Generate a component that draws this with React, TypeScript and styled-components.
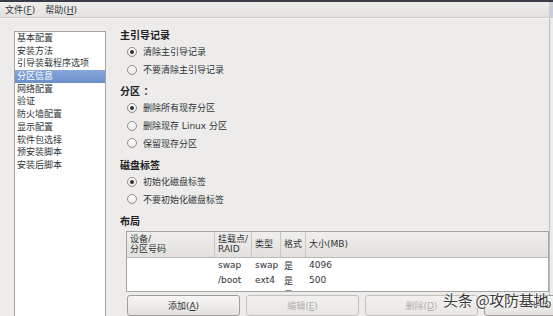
import styled, { createGlobalStyle } from "styled-components"

const GlobalStyle = createGlobalStyle`
  html, body {
    margin: 0;
    padding: 0;
    background: #edeceb;
  }
  body {
    font-family: "DejaVu Sans", "Noto Sans CJK SC", sans-serif;
    font-size: 9px;
    color: #2e3436;
  }
`

const NavItems: string[] = [
  "基本配置",
  "安装方法",
  "引导装载程序选项",
  "分区信息",
  "网络配置",
  "验证",
  "防火墙配置",
  "显示配置",
  "软件包选择",
  "预安装脚本",
  "安装后脚本",
]

type Option = { label: string; checked: boolean }
type Group = { title: string; options: Option[] }

const Groups: Group[] = [
  {
    title: "主引导记录",
    options: [
      { label: "清除主引导记录", checked: true },
      { label: "不要清除主引导记录", checked: false },
    ],
  },
  {
    title: "分区 ：",
    options: [
      { label: "删除所有现存分区", checked: true },
      { label: "删除现存 Linux 分区", checked: false },
      { label: "保留现存分区", checked: false },
    ],
  },
  {
    title: "磁盘标签",
    options: [
      { label: "初始化磁盘标签", checked: true },
      { label: "不要初始化磁盘标签", checked: false },
    ],
  },
]

const Rows: string[][] = [
  ["", "swap", "swap", "是", "4096"],
  ["", "/boot", "ext4", "是", "500"],
  ["", "/", "ext4", "是", "1"],
]

const ColWidths = [88, 37, 29, 25]

const Buttons: { label: string; key: string; disabled: boolean }[] = [
  { label: "添加(", key: "A", disabled: false },
  { label: "编辑(", key: "E", disabled: true },
  { label: "删除(", key: "D", disabled: true },
  { label: "RAID", key: "", disabled: false },
]

export default function App() {
  return (
    <Window>
      <GlobalStyle />
      <TopStrip />
      <MenuBar>
        <MenuEntry>
          文件(<u>F</u>)
        </MenuEntry>
        <MenuEntry>
          帮助(<u>H</u>)
        </MenuEntry>
      </MenuBar>

      <Body>
        <Sidebar>
          {NavItems.map((item) => (
            <NavItem key={item} $active={item === "分区信息"}>
              {item}
            </NavItem>
          ))}
        </Sidebar>

        <Content>
          {Groups.map((group) => (
            <Section key={group.title}>
              <SectionTitle>{group.title}</SectionTitle>
              {group.options.map((opt) => (
                <RadioRow key={opt.label}>
                  <Radio $checked={opt.checked} />
                  {opt.label}
                </RadioRow>
              ))}
            </Section>
          ))}

          <Section>
            <SectionTitle>布局</SectionTitle>
            <Table>
              <HeaderRow>
                <HeadCell $w={ColWidths[0]}>
                  设备/
                  <br />
                  分区号码
                </HeadCell>
                <HeadCell $w={ColWidths[1]}>
                  挂载点/
                  <br />
                  RAID
                </HeadCell>
                <HeadCell $w={ColWidths[2]}>类型</HeadCell>
                <HeadCell $w={ColWidths[3]}>格式</HeadCell>
                <HeadCell $last>大小(MB)</HeadCell>
              </HeaderRow>
              <TableBody>
                {Rows.map((row, i) => (
                  <BodyRow key={i}>
                    {row.map((cell, j) => (
                      <Cell key={j} $w={ColWidths[j]}>
                        {cell}
                      </Cell>
                    ))}
                  </BodyRow>
                ))}
              </TableBody>
            </Table>
          </Section>

          <ButtonRow>
            {Buttons.map((b) => (
              <Button key={b.label} disabled={b.disabled}>
                {b.key ? (
                  <>
                    {b.label}
                    <u>{b.key}</u>)
                  </>
                ) : (
                  b.label
                )}
              </Button>
            ))}
          </ButtonRow>
        </Content>
      </Body>

      <Watermark>头条 @攻防基地</Watermark>
    </Window>
  )
}

const Window = styled.div`
  position: relative;
  width: 553px;
  height: 316px;
  overflow: hidden;
  background: #edeceb;
`

const TopStrip = styled.div`
  height: 2px;
  background: #393c48;
`

const MenuBar = styled.div`
  height: 15px;
  display: flex;
  align-items: center;
  gap: 10px;
  padding-left: 5px;
  background: linear-gradient(#eeedeb, #e4e2df);
  border-bottom: 1px solid #cfccc7;
  border-right: 4px solid #c9d0d8;
`

const MenuEntry = styled.span`
  font-size: 9px;
  color: #2e3436;

  u {
    text-underline-offset: 1px;
  }
`

const Body = styled.div`
  display: flex;
  align-items: flex-start;
  padding-top: 12px;
  padding-left: 14px;
  width: 535px;
  height: 300px;
  border-right: 1px solid #b7bec8;
  border-top: 1px solid #f6f5f3;
`

const Sidebar = styled.ul`
  margin: 0;
  padding: 0;
  list-style: none;
  width: 90px;
  height: 300px;
  flex-shrink: 0;
  background: #fff;
  border: 1px solid #a4a29e;
`

const NavItem = styled.li<{ $active?: boolean }>`
  height: 12.7px;
  line-height: 12.7px;
  padding-left: 2px;
  white-space: nowrap;
  color: ${(p) => (p.$active ? "#fff" : "#2e3436")};
  background: ${(p) => (p.$active ? "linear-gradient(#88a7da, #6a8ecb)" : "transparent")};
`

const Content = styled.div`
  flex: 1;
  margin-left: 14px;
  margin-top: -2px;
  display: flex;
  flex-direction: column;
`

const Section = styled.div`
  display: flex;
  flex-direction: column;
  & + & {
    margin-top: 6.7px;
  }
`

const SectionTitle = styled.div`
  height: 14px;
  line-height: 14px;
  font-size: 10px;
  font-weight: bold;
  color: #222;
  white-space: pre;
`

const RadioRow = styled.label`
  height: 17.7px;
  display: flex;
  align-items: center;
  padding-left: 7px;
  gap: 6px;
  white-space: nowrap;
`

const Radio = styled.span<{ $checked?: boolean }>`
  position: relative;
  width: 8px;
  height: 8px;
  border-radius: 50%;
  border: 1px solid #8f8d89;
  background: linear-gradient(#ffffff, #e9e8e6);
  flex-shrink: 0;

  &::after {
    content: "";
    display: ${(p) => (p.$checked ? "block" : "none")};
    position: absolute;
    left: 2px;
    top: 2px;
    width: 4px;
    height: 4px;
    border-radius: 50%;
    background: #303030;
  }
`

const Table = styled.div`
  margin-top: 2px;
  margin-left: 6px;
  width: 421px;
  border: 1px solid #a6a4a0;
  background: #fff;
`

const HeaderRow = styled.div`
  display: flex;
  height: 25px;
  background: linear-gradient(#f0efed, #e2e0dc);
  border-bottom: 1px solid #bdbab5;
`

const HeadCell = styled.div<{ $w?: number; $last?: boolean }>`
  width: ${(p) => (p.$w ? `${p.$w}px` : "auto")};
  flex: ${(p) => (p.$last ? 1 : "none")};
  display: flex;
  align-items: center;
  padding-left: 3px;
  box-sizing: border-box;
  line-height: 10px;
  border-right: ${(p) => (p.$last ? "none" : "1px solid #cac7c2")};
  white-space: nowrap;
`

const TableBody = styled.div`
  height: 33px;
  overflow: hidden;
`

const BodyRow = styled.div`
  display: flex;
  height: 14.8px;
  align-items: center;
`

const Cell = styled.div<{ $w?: number }>`
  width: ${(p) => (p.$w ? `${p.$w}px` : "auto")};
  flex: ${(p) => (p.$w ? "none" : 1)};
  padding-left: 3px;
  box-sizing: border-box;
  white-space: nowrap;
`

const ButtonRow = styled.div`
  display: flex;
  gap: 6px;
  margin-top: 3px;
  margin-left: 7px;
`

const Button = styled.button`
  flex-shrink: 0;
  width: 113px;
  height: 21px;
  border: 1px solid #a19e99;
  border-radius: 3px;
  background: linear-gradient(#f7f6f4, #e4e2de);
  font-family: "DejaVu Sans", "Noto Sans CJK SC", sans-serif;
  font-size: 9px;
  color: #2e3436;
  padding: 0;

  &:disabled {
    color: #b3b0ab;
    border-color: #c3c0bb;
    background: linear-gradient(#f1f0ee, #e9e7e4);
  }
`

const Watermark = styled.div`
  position: absolute;
  left: 443px;
  top: 289px;
  font-family: "Noto Sans CJK SC", sans-serif;
  font-size: 15px;
  color: #3a3a3a;
  letter-spacing: -0.3px;
  text-shadow: 0 0 2px #fff, 0 0 2px #fff;
`
